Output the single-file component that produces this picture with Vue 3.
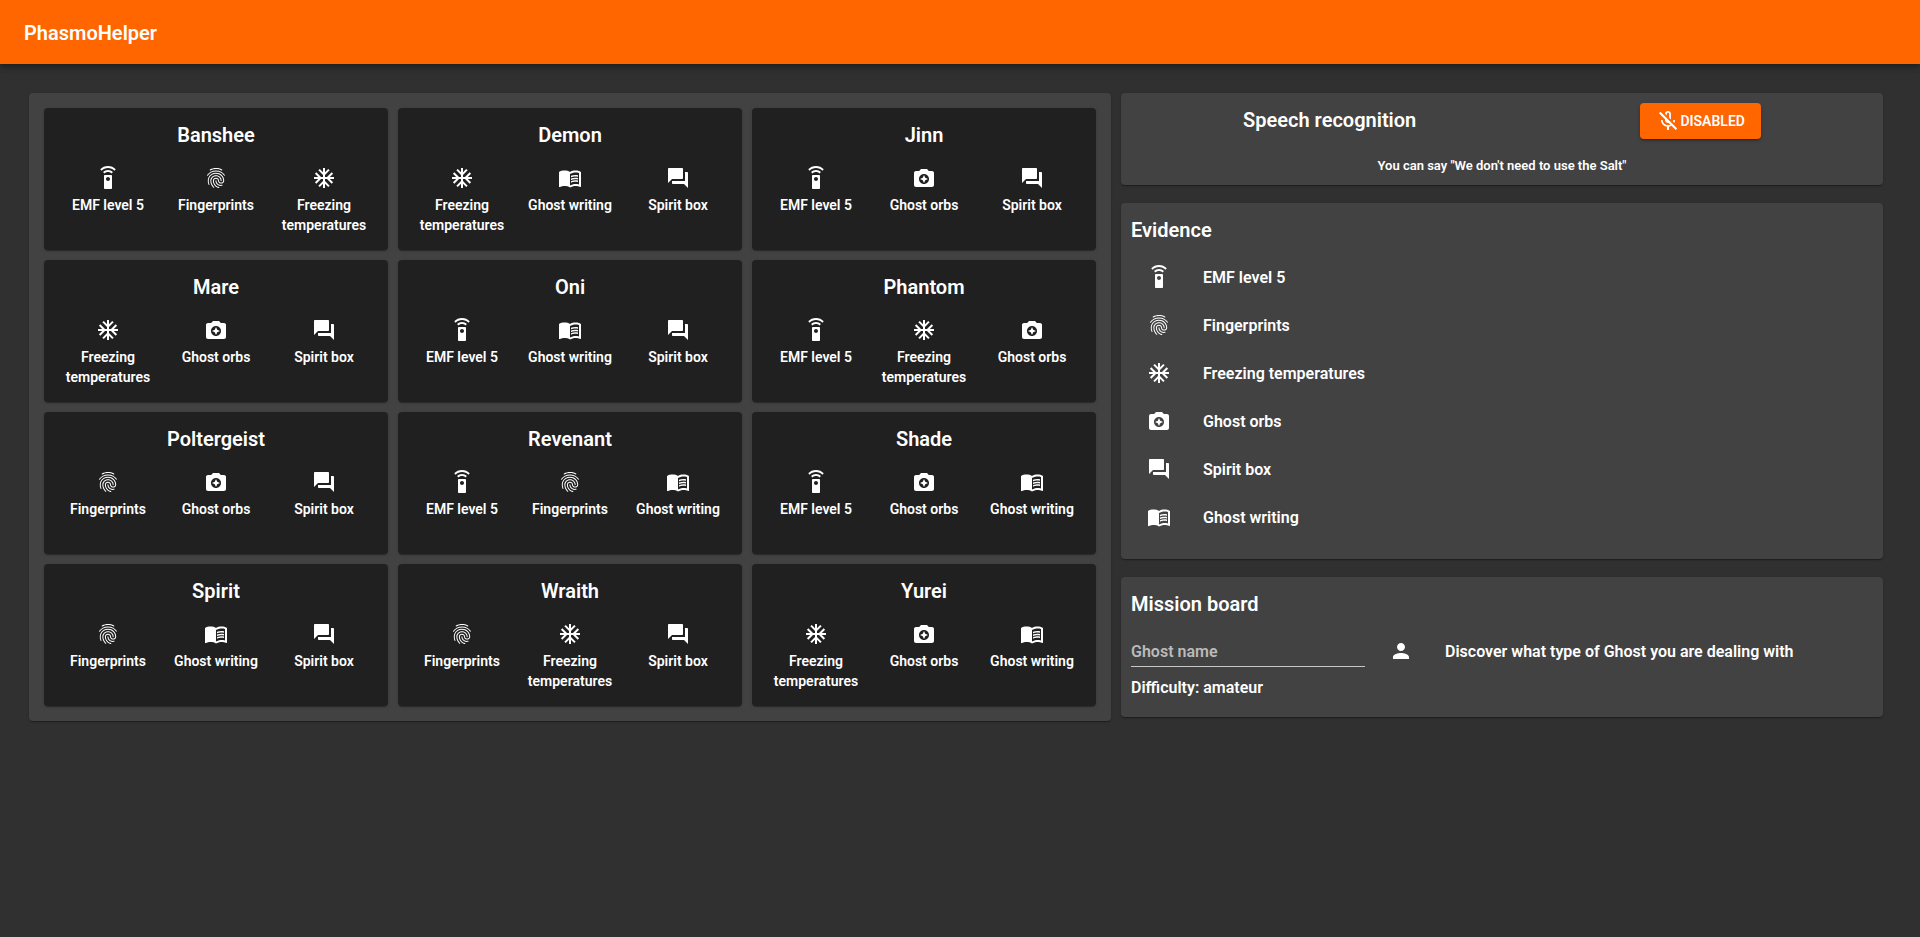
<script setup>
import { ref } from 'vue'

const evidence = {
  emf: {
    label: 'EMF level 5',
    path: 'M15 9H9c-.55 0-1 .45-1 1v12c0 .55.45 1 1 1h6c.55 0 1-.45 1-1V10c0-.55-.45-1-1-1zm-3 6c-1.1 0-2-.9-2-2s.9-2 2-2 2 .9 2 2-.9 2-2 2zM7.05 6.05l1.41 1.41C9.37 6.56 10.62 6 12 6s2.63.56 3.54 1.46l1.41-1.41C15.68 4.78 13.93 4 12 4s-3.68.78-4.95 2.05zM12 0C8.96 0 6.21 1.23 4.22 3.22l1.41 1.41C7.26 3.01 9.51 2 12 2s4.74 1.01 6.36 2.64l1.41-1.41C17.79 1.23 15.04 0 12 0z'
  },
  prints: {
    label: 'Fingerprints',
    path: 'M17.81 4.47c-.08 0-.16-.02-.23-.06C15.66 3.42 14 3 12.01 3c-1.98 0-3.86.47-5.57 1.41-.24.13-.54.04-.68-.2-.13-.24-.04-.55.2-.68C7.82 2.52 9.86 2 12.01 2c2.13 0 3.99.47 6.03 1.52.25.13.34.43.21.67-.09.18-.26.28-.44.28zM3.5 9.72c-.1 0-.2-.03-.29-.09-.23-.16-.28-.47-.12-.7.99-1.4 2.25-2.5 3.75-3.27C9.98 4.04 14 4.03 17.15 5.65c1.5.77 2.76 1.86 3.75 3.25.16.22.11.54-.12.7-.23.16-.54.11-.7-.12-.9-1.26-2.04-2.25-3.39-2.94-2.87-1.47-6.54-1.47-9.4.01-1.36.7-2.5 1.7-3.4 2.96-.08.14-.23.21-.39.21zm6.25 12.07c-.13 0-.26-.05-.35-.15-.87-.87-1.34-1.43-2.01-2.64-.69-1.23-1.05-2.73-1.05-4.34 0-2.97 2.54-5.39 5.66-5.39s5.66 2.42 5.66 5.39c0 .28-.22.5-.5.5s-.5-.22-.5-.5c0-2.42-2.09-4.39-4.66-4.39-2.57 0-4.66 1.97-4.66 4.39 0 1.44.32 2.77.93 3.85.64 1.15 1.08 1.64 1.85 2.42.19.2.19.51 0 .71-.11.1-.24.15-.37.15zm7.17-1.85c-1.19 0-2.24-.3-3.1-.89-1.49-1.01-2.38-2.65-2.38-4.39 0-.28.22-.5.5-.5s.5.22.5.5c0 1.41.72 2.74 1.94 3.56.71.48 1.54.71 2.54.71.24 0 .64-.03 1.04-.1.27-.05.53.13.58.41.05.27-.13.53-.41.58-.57.11-1.07.12-1.21.12zM14.91 22c-.04 0-.09-.01-.13-.02-1.59-.44-2.63-1.03-3.72-2.1-1.4-1.39-2.17-3.24-2.17-5.22 0-1.62 1.38-2.94 3.08-2.94 1.7 0 3.08 1.32 3.08 2.94 0 1.07.93 1.94 2.08 1.94s2.08-.87 2.08-1.94c0-3.77-3.25-6.83-7.25-6.83-2.84 0-5.44 1.58-6.61 4.03-.39.81-.59 1.76-.59 2.8 0 .78.07 2.01.67 3.61.1.26-.03.55-.29.64-.26.1-.55-.04-.64-.29-.49-1.31-.73-2.61-.73-3.96 0-1.2.23-2.29.68-3.24 1.33-2.79 4.28-4.6 7.51-4.6 4.55 0 8.25 3.51 8.25 7.83 0 1.62-1.38 2.94-3.08 2.94s-3.08-1.32-3.08-2.94c0-1.07-.93-1.94-2.08-1.94s-2.08.87-2.08 1.94c0 1.71.66 3.31 1.87 4.51.95.94 1.86 1.46 3.27 1.85.27.07.42.35.35.61-.05.23-.26.38-.47.38z'
  },
  freezing: {
    label: 'Freezing temperatures',
    path: 'M22 11h-4.17l3.24-3.24-1.41-1.42L15 11h-2V9l4.66-4.66-1.42-1.41L13 6.17V2h-2v4.17L7.76 2.93 6.34 4.34 11 9v2H9L4.34 6.34 2.93 7.76 6.17 11H2v2h4.17l-3.24 3.24 1.41 1.42L9 13h2v2l-4.66 4.66 1.42 1.41L11 17.83V22h2v-4.17l3.24 3.24 1.42-1.41L13 15v-2h2l4.66 4.66 1.41-1.42L17.83 13H22z'
  },
  orbs: {
    label: 'Ghost orbs',
    path: 'M9 3L7.17 5H4c-1.1 0-2 .9-2 2v12c0 1.1.9 2 2 2h16c1.1 0 2-.9 2-2V7c0-1.1-.9-2-2-2h-3.17L15 3H9zm3 15c-2.76 0-5-2.24-5-5s2.24-5 5-5 5 2.24 5 5-2.24 5-5 5zM12 17l1.25-2.75L16 13l-2.75-1.25L12 9l-1.25 2.75L8 13l2.75 1.25z'
  },
  box: {
    label: 'Spirit box',
    path: 'M21 6h-2v9H6v2c0 .55.45 1 1 1h11l4 4V7c0-.55-.45-1-1-1zm-4 6V3c0-.55-.45-1-1-1H3c-.55 0-1 .45-1 1v14l4-4h10c.55 0 1-.45 1-1z'
  },
  writing: {
    label: 'Ghost writing',
    path: 'M21 5c-1.11-.35-2.33-.5-3.5-.5-1.95 0-4.05.4-5.5 1.5-1.45-1.1-3.55-1.5-5.5-1.5S2.45 4.9 1 6v14.65c0 .25.25.5.5.5.1 0 .15-.05.25-.05C3.1 20.45 5.05 20 6.5 20c1.95 0 4.05.4 5.5 1.5 1.35-.85 3.8-1.5 5.5-1.5 1.65 0 3.35.3 4.75 1.05.1.05.15.05.25.05.25 0 .5-.25.5-.5V6c-.6-.45-1.25-.75-2-1zm0 13.5c-1.1-.35-2.3-.5-3.5-.5-1.7 0-4.15.65-5.5 1.5V8c1.35-.85 3.8-1.5 5.5-1.5 1.2 0 2.4.15 3.5.5v11.5zM17.5 10.5c.88 0 1.73.09 2.5.26V9.24c-.79-.15-1.64-.24-2.5-.24-1.7 0-3.24.29-4.5.83v1.66c1.13-.64 2.7-.99 4.5-.99zM13 12.49v1.66c1.13-.64 2.7-.99 4.5-.99.88 0 1.73.09 2.5.26V11.9c-.79-.15-1.64-.24-2.5-.24-1.7 0-3.24.3-4.5.83zM17.5 14.33c-1.7 0-3.24.29-4.5.83v1.66c1.13-.64 2.7-.99 4.5-.99.88 0 1.73.09 2.5.26v-1.52c-.79-.16-1.64-.24-2.5-.24z'
  }
}

const evidenceOrder = ['emf', 'prints', 'freezing', 'orbs', 'box', 'writing']

const ghosts = [
  { name: 'Banshee', clues: ['emf', 'prints', 'freezing'] },
  { name: 'Demon', clues: ['freezing', 'writing', 'box'] },
  { name: 'Jinn', clues: ['emf', 'orbs', 'box'] },
  { name: 'Mare', clues: ['freezing', 'orbs', 'box'] },
  { name: 'Oni', clues: ['emf', 'writing', 'box'] },
  { name: 'Phantom', clues: ['emf', 'freezing', 'orbs'] },
  { name: 'Poltergeist', clues: ['prints', 'orbs', 'box'] },
  { name: 'Revenant', clues: ['emf', 'prints', 'writing'] },
  { name: 'Shade', clues: ['emf', 'orbs', 'writing'] },
  { name: 'Spirit', clues: ['prints', 'writing', 'box'] },
  { name: 'Wraith', clues: ['prints', 'freezing', 'box'] },
  { name: 'Yurei', clues: ['freezing', 'orbs', 'writing'] }
]

const ghostName = ref('')
</script>

<template>
  <header class="bar">
    <h1 class="heading">PhasmoHelper</h1>
  </header>
  <main class="content">
    <section class="panel ghosts">
      <article v-for="ghost in ghosts" :key="ghost.name" class="card">
        <h2 class="heading">{{ ghost.name }}</h2>
        <ul class="clues">
          <li v-for="key in ghost.clues" :key="key" class="clue">
            <svg class="icon" viewBox="0 0 24 24" aria-hidden="true"><path :d="evidence[key].path" /></svg>
            <span>{{ evidence[key].label }}</span>
          </li>
        </ul>
      </article>
    </section>

    <div class="side">
      <section class="panel box">
        <div class="speech">
          <h2 class="heading">Speech recognition</h2>
          <button type="button" class="toggle">
            <svg class="icon" viewBox="0 0 24 24" aria-hidden="true">
              <path d="M10.8 4.9c0-.66.54-1.2 1.2-1.2s1.2.54 1.2 1.2l-.01 3.91L15 10.6V5c0-1.66-1.34-3-3-3-1.54 0-2.79 1.16-2.96 2.65l1.76 1.76V4.9zM19 11h-1.7c0 .58-.1 1.13-.27 1.64l1.27 1.27c.44-.88.7-1.87.7-2.91zM4.41 2.86L3 4.27l6 6V11c0 1.66 1.34 3 3 3 .23 0 .44-.03.65-.08l1.66 1.66c-.71.33-1.5.52-2.31.52-2.76 0-5.3-2.1-5.3-5.1H5c0 3.41 2.72 6.23 6 6.72V21h2v-3.28c.91-.13 1.77-.45 2.55-.9l4.2 4.2 1.41-1.41L4.41 2.86z" />
            </svg>
            <span>DISABLED</span>
          </button>
        </div>
        <p class="hint">You can say "We don't need to use the Salt"</p>
      </section>

      <section class="panel box">
        <h2 class="heading">Evidence</h2>
        <ul class="list">
          <li v-for="key in evidenceOrder" :key="key" class="row">
            <svg class="icon" viewBox="0 0 24 24" aria-hidden="true"><path :d="evidence[key].path" /></svg>
            <span>{{ evidence[key].label }}</span>
          </li>
        </ul>
      </section>

      <section class="panel box">
        <h2 class="heading">Mission board</h2>
        <div class="mission">
          <input v-model="ghostName" class="name" type="text" placeholder="Ghost name" aria-label="Ghost name" />
          <div class="row">
            <svg class="icon" viewBox="0 0 24 24" aria-hidden="true">
              <path d="M12 12c2.21 0 4-1.79 4-4s-1.79-4-4-4-4 1.79-4 4 1.79 4 4 4zm0 2c-2.67 0-8 1.34-8 4v2h16v-2c0-2.66-5.33-4-8-4z" />
            </svg>
            <span>Discover what type of Ghost you are dealing with</span>
          </div>
        </div>
        <p class="difficulty">Difficulty: amateur</p>
      </section>
    </div>
  </main>
</template>

<style>
body {
  margin: 0;
  background: #303030;
}
</style>

<style scoped>
.bar,
.content {
  font-family: Roboto, "Liberation Sans", sans-serif;
  font-weight: 600;
  font-size: 16px;
  line-height: 24px;
  color: #fff;
}

.bar {
  display: flex;
  align-items: center;
  height: 64px;
  padding: 0 24px;
  background: #ff6600;
  box-shadow: 0 2px 4px -1px rgba(0, 0, 0, 0.2), 0 4px 5px rgba(0, 0, 0, 0.14), 0 1px 10px rgba(0, 0, 0, 0.12);
}

.heading {
  margin: 0;
  padding-top: 2px;
  font-weight: 600;
  font-size: 20px;
  line-height: 30px;
}

.content {
  display: grid;
  grid-template-columns: minmax(0, 71fr) minmax(0, 50fr);
  align-items: start;
  gap: 10px;
  padding: 29px 37px 29px 29px;
}

.panel,
.card {
  border-radius: 4px;
  box-shadow: 0 2px 1px -1px rgba(0, 0, 0, 0.2), 0 1px 1px rgba(0, 0, 0, 0.14), 0 1px 3px rgba(0, 0, 0, 0.12);
}

.panel {
  background: #424242;
}

.ghosts {
  display: grid;
  grid-template-columns: repeat(3, minmax(0, 1fr));
  gap: 10px;
  padding: 15px;
}

.card {
  padding: 10px 10px 15px;
  background: #202020;
  text-align: center;
}

.clues {
  display: grid;
  grid-template-columns: repeat(3, minmax(0, 1fr));
  margin: 0;
  padding: 16px 0 0;
  list-style: none;
}

.clue {
  display: flex;
  flex-direction: column;
  align-items: center;
  gap: 5px;
  min-height: 69px;
  font-size: 14px;
  line-height: 20px;
}

.icon {
  flex: none;
  width: 24px;
  height: 24px;
  fill: currentColor;
}

.side {
  display: flex;
  flex-direction: column;
  gap: 18px;
}

.box {
  padding: 10px;
}

.speech {
  display: flex;
  justify-content: space-around;
}

.toggle {
  display: flex;
  align-items: center;
  height: 36px;
  padding: 0 16px;
  border: 0;
  border-radius: 4px;
  background: #ff6600;
  color: #fff;
  font: inherit;
  font-size: 14px;
  cursor: pointer;
  box-shadow: 0 3px 1px -2px rgba(0, 0, 0, 0.2), 0 2px 2px rgba(0, 0, 0, 0.14), 0 1px 5px rgba(0, 0, 0, 0.12);
}

.hint {
  margin: 18px 0 0;
  text-align: center;
  font-size: 13px;
  line-height: 18px;
}

.list {
  margin: 0;
  padding: 8px 0;
  list-style: none;
}

.row {
  display: flex;
  align-items: center;
  gap: 32px;
  min-height: 48px;
  padding: 0 16px;
}

.row span {
  padding-top: 2px;
}

.mission {
  display: grid;
  grid-template-columns: minmax(0, 117fr) minmax(0, 250fr);
  align-items: center;
  gap: 8px;
  padding-top: 8px;
}

.name {
  box-sizing: border-box;
  width: 100%;
  height: 32px;
  padding: 2px 0 0;
  border: 0;
  border-bottom: 1px solid #c6c6c6;
  background: transparent;
  color: #fff;
  font: inherit;
  outline: none;
}

.name::placeholder {
  color: #bababa;
  opacity: 1;
}

.difficulty {
  margin: 0;
  padding: 1px 0 7px;
}
</style>
